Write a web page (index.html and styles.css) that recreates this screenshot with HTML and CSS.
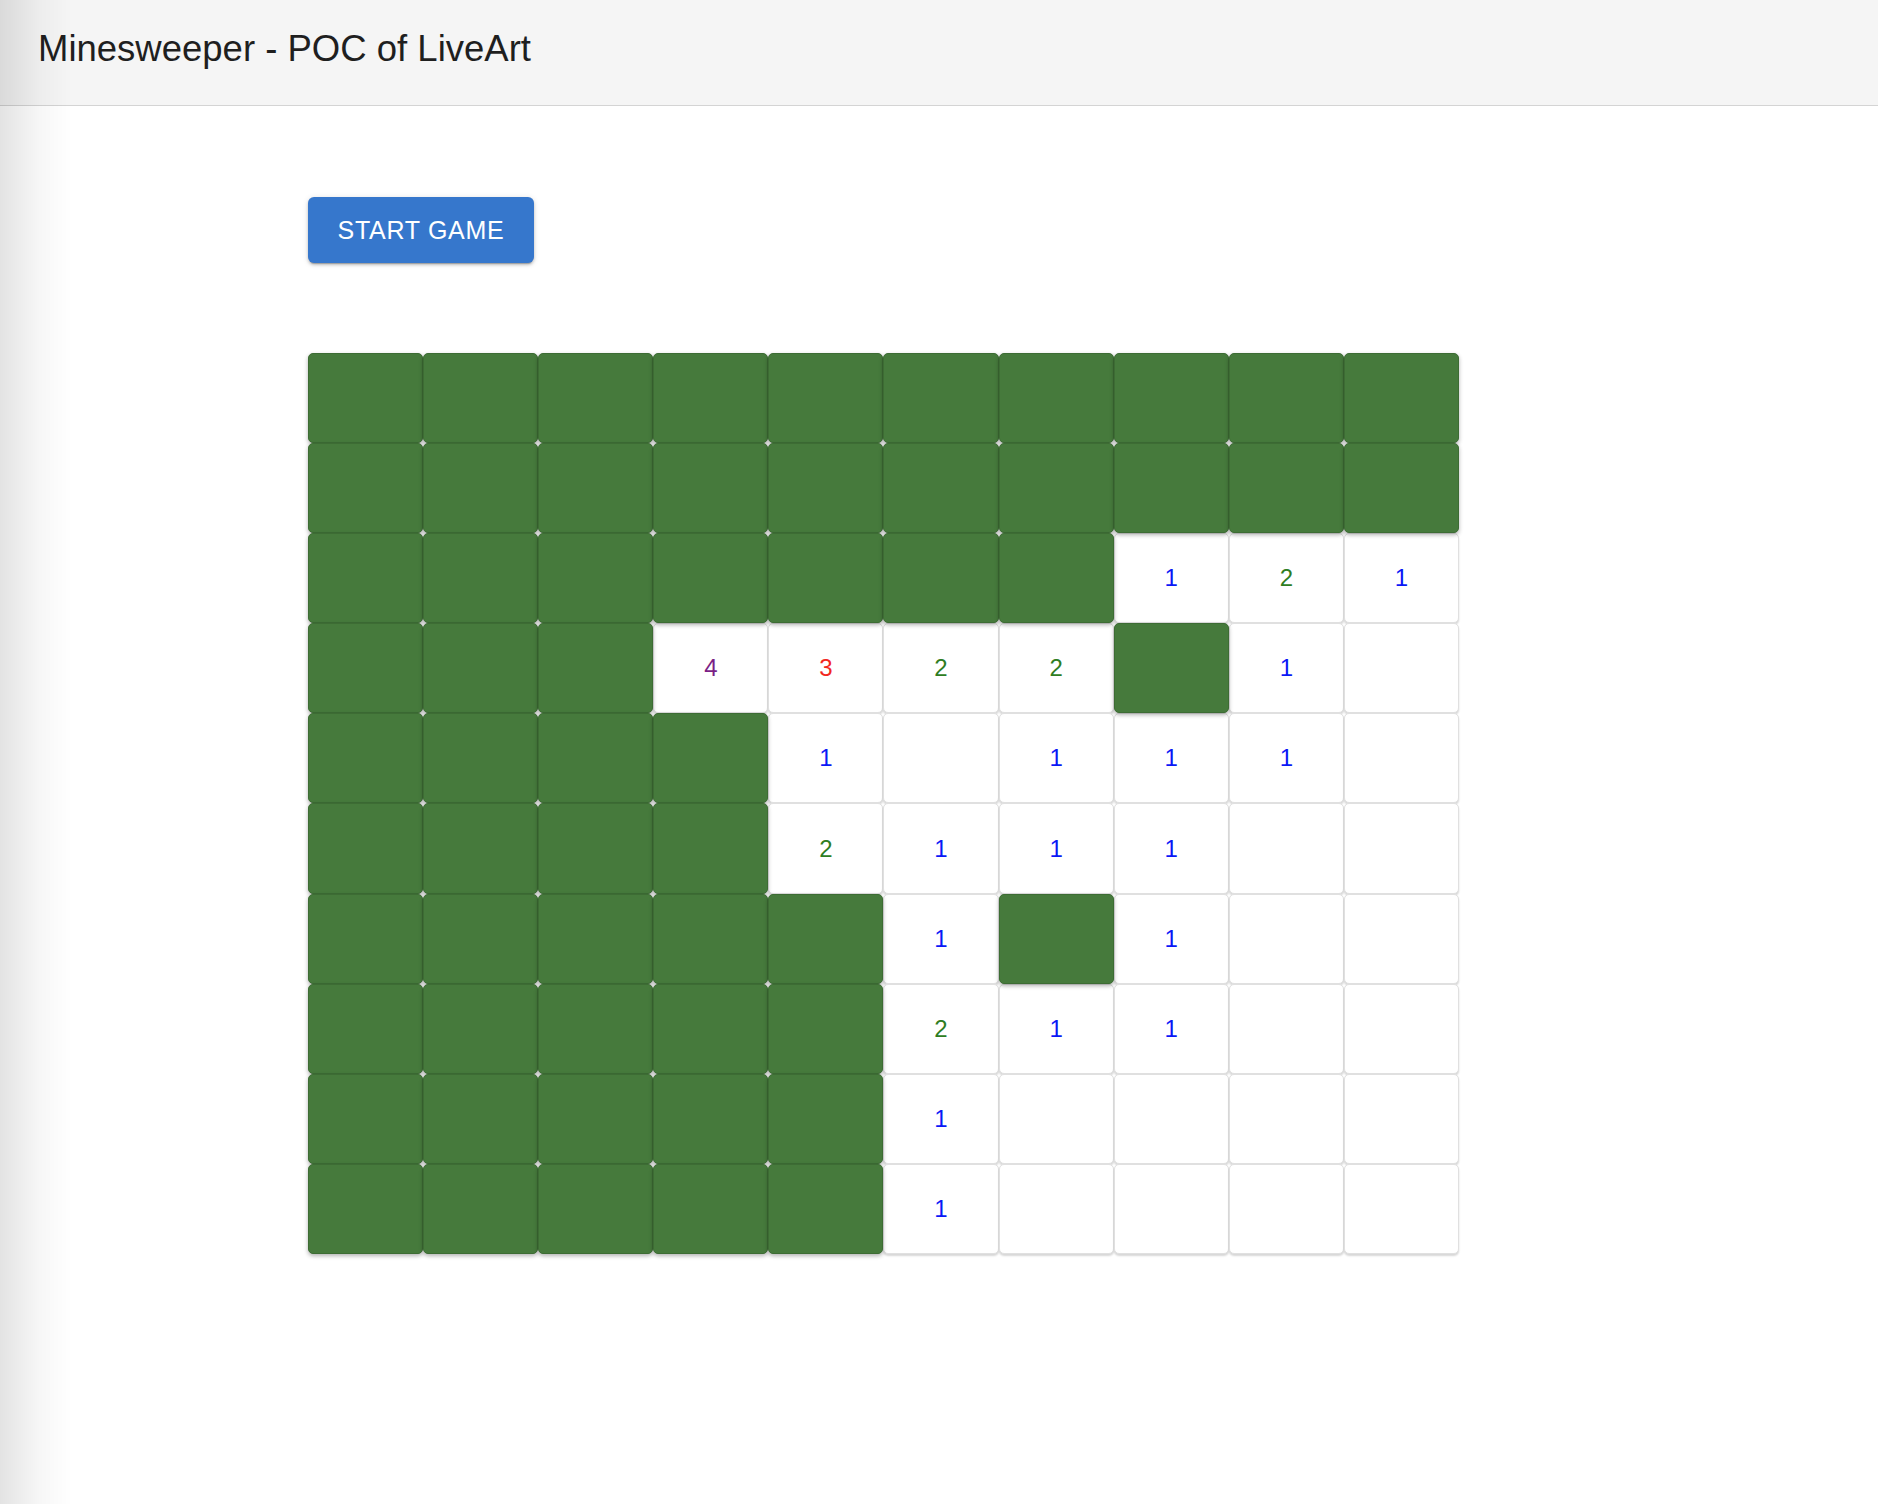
FILE: index.html
```html
<!DOCTYPE html>
<html lang="en">
<head>
<meta charset="utf-8">
<title>Minesweeper - POC of LiveArt</title>
<link rel="stylesheet" href="styles.css">
</head>
<body>
<div class="edge-shade"></div>
<header class="app-bar">
  <h1 class="app-title">Minesweeper - POC of LiveArt</h1>
</header>
<main class="content">
  <button class="start-btn" type="button">START GAME</button>
  <div class="board">
    <div class="cell hidden"></div><div class="cell hidden"></div><div class="cell hidden"></div><div class="cell hidden"></div><div class="cell hidden"></div><div class="cell hidden"></div><div class="cell hidden"></div><div class="cell hidden"></div><div class="cell hidden"></div><div class="cell hidden"></div>

    <div class="cell hidden"></div><div class="cell hidden"></div><div class="cell hidden"></div><div class="cell hidden"></div><div class="cell hidden"></div><div class="cell hidden"></div><div class="cell hidden"></div><div class="cell hidden"></div><div class="cell hidden"></div><div class="cell hidden"></div>

    <div class="cell hidden"></div><div class="cell hidden"></div><div class="cell hidden"></div><div class="cell hidden"></div><div class="cell hidden"></div><div class="cell hidden"></div><div class="cell hidden"></div><div class="cell open n1">1</div><div class="cell open n2">2</div><div class="cell open n1">1</div>

    <div class="cell hidden"></div><div class="cell hidden"></div><div class="cell hidden"></div><div class="cell open n4">4</div><div class="cell open n3">3</div><div class="cell open n2">2</div><div class="cell open n2">2</div><div class="cell hidden"></div><div class="cell open n1">1</div><div class="cell open"></div>

    <div class="cell hidden"></div><div class="cell hidden"></div><div class="cell hidden"></div><div class="cell hidden"></div><div class="cell open n1">1</div><div class="cell open"></div><div class="cell open n1">1</div><div class="cell open n1">1</div><div class="cell open n1">1</div><div class="cell open"></div>

    <div class="cell hidden"></div><div class="cell hidden"></div><div class="cell hidden"></div><div class="cell hidden"></div><div class="cell open n2">2</div><div class="cell open n1">1</div><div class="cell open n1">1</div><div class="cell open n1">1</div><div class="cell open"></div><div class="cell open"></div>

    <div class="cell hidden"></div><div class="cell hidden"></div><div class="cell hidden"></div><div class="cell hidden"></div><div class="cell hidden"></div><div class="cell open n1">1</div><div class="cell hidden"></div><div class="cell open n1">1</div><div class="cell open"></div><div class="cell open"></div>

    <div class="cell hidden"></div><div class="cell hidden"></div><div class="cell hidden"></div><div class="cell hidden"></div><div class="cell hidden"></div><div class="cell open n2">2</div><div class="cell open n1">1</div><div class="cell open n1">1</div><div class="cell open"></div><div class="cell open"></div>

    <div class="cell hidden"></div><div class="cell hidden"></div><div class="cell hidden"></div><div class="cell hidden"></div><div class="cell hidden"></div><div class="cell open n1">1</div><div class="cell open"></div><div class="cell open"></div><div class="cell open"></div><div class="cell open"></div>

    <div class="cell hidden"></div><div class="cell hidden"></div><div class="cell hidden"></div><div class="cell hidden"></div><div class="cell hidden"></div><div class="cell open n1">1</div><div class="cell open"></div><div class="cell open"></div><div class="cell open"></div><div class="cell open"></div>
  </div>
</main>
</body>
</html>
```

FILE: styles.css
```css
* {
  box-sizing: border-box;
}

html, body {
  margin: 0;
  padding: 0;
  background: #ffffff;
  font-family: "Liberation Sans", Arial, Helvetica, sans-serif;
  color: #212121;
}

body {
  min-height: 1504px;
}

.edge-shade {
  position: fixed;
  left: 0;
  top: 0;
  bottom: 0;
  width: 72px;
  background: linear-gradient(to right, rgba(0, 0, 0, 0.11), rgba(0, 0, 0, 0.03) 55%, rgba(0, 0, 0, 0));
  pointer-events: none;
  z-index: 10;
}

.app-bar {
  height: 106px;
  background: #f5f5f5;
  border-bottom: 1px solid #d4d4d4;
  display: flex;
  align-items: center;
  padding-left: 38px;
  padding-bottom: 8px;
}

.app-title {
  margin: 0;
  font-size: 36.5px;
  font-weight: 400;
  color: #1f1f1f;
  letter-spacing: 0;
}

.content {
  padding: 91px 0 0 308px;
  display: flex;
  flex-direction: column;
  align-items: flex-start;
  gap: 90px;
}

.start-btn {
  width: 226px;
  height: 66px;
  border: none;
  border-radius: 6px;
  background: #3677cc;
  color: #ffffff;
  font-family: "Liberation Sans", Arial, Helvetica, sans-serif;
  font-size: 25px;
  letter-spacing: 0.7px;
  font-weight: 400;
  padding: 0;
  display: flex;
  align-items: center;
  justify-content: center;
  box-shadow: 0 3px 1px -2px rgba(0, 0, 0, 0.2), 0 2px 3px 0 rgba(0, 0, 0, 0.18), 0 1px 6px 0 rgba(0, 0, 0, 0.12);
}

.board {
  width: 1151px;
  display: grid;
  grid-template-columns: repeat(10, 1fr);
  grid-auto-rows: 90.1px;
}

.cell {
  border-radius: 5px;
  display: flex;
  align-items: center;
  justify-content: center;
  font-size: 24px;
  line-height: 1;
}

.hidden {
  background: #467a3c;
  border: 1px solid #3d6c34;
  box-shadow: 0 2px 4px rgba(0, 0, 0, 0.3);
  z-index: 1;
}

.open {
  background: #ffffff;
  border: 1px solid #e0e0e0;
  box-shadow: 0 2px 2px rgba(0, 0, 0, 0.16);
}

.n1 { color: #0a18f6; }
.n2 { color: #2e7d22; }
.n3 { color: #f2281e; }
.n4 { color: #7b1f86; }
```
